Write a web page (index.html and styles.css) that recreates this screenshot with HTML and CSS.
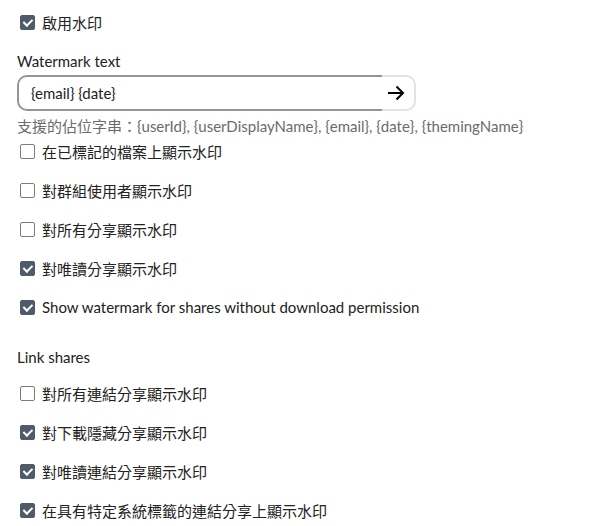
FILE: index.html
```html
<!DOCTYPE html>
<html lang="zh-Hant">
<head>
    <meta charset="UTF-8">
    <title>Watermark settings</title>
    <link rel="stylesheet" href="styles.css">
</head>
<body>
    <div class="settings">
        <label class="check checked"><span class="box"></span><span>啟用水印</span></label>

        <div class="label">Watermark text</div>
        <div class="field">
            <div class="field-input">{email} {date}</div>
            <button class="field-btn" type="button">
                <svg width="20" height="20" viewBox="0 0 20 20"><path d="M2 10h15M10.5 3.5 17 10l-6.5 6.5" fill="none" stroke="#000" stroke-width="2"/></svg>
            </button>
        </div>
        <div class="hint">支援的佔位字串：{userId}, {userDisplayName}, {email}, {date}, {themingName}</div>

        <div class="list">
            <label class="check"><span class="box"></span><span>在已標記的檔案上顯示水印</span></label>
            <label class="check"><span class="box"></span><span>對群組使用者顯示水印</span></label>
            <label class="check"><span class="box"></span><span>對所有分享顯示水印</span></label>
            <label class="check checked"><span class="box"></span><span>對唯讀分享顯示水印</span></label>
            <label class="check checked"><span class="box"></span><span>Show watermark for shares without download permission</span></label>
        </div>

        <div class="label section">Link shares</div>
        <div class="list">
            <label class="check"><span class="box"></span><span>對所有連結分享顯示水印</span></label>
            <label class="check checked"><span class="box"></span><span>對下載隱藏分享顯示水印</span></label>
            <label class="check checked"><span class="box"></span><span>對唯讀連結分享顯示水印</span></label>
            <label class="check checked"><span class="box"></span><span>在具有特定系統標籤的連結分享上顯示水印</span></label>
        </div>
    </div>
</body>
</html>
```
FILE: styles.css
```css
body {
    margin: 0;
    background: #fff;
    font-family: Lato, "Noto Sans CJK TC", sans-serif;
    font-size: 15px;
    color: #222;
}
.settings {
    padding: 7px 0 0 17px;
    display: flex;
    flex-direction: column;
}
.list {
    display: flex;
    flex-direction: column;
    gap: 9px;
}
.check {
    display: flex;
    align-items: center;
    height: 30px;
    padding-left: 3px;
    gap: 7px;
    cursor: pointer;
}
.check .box {
    width: 15px;
    height: 15px;
    border: 1.5px solid #7c7c7c;
    border-radius: 2px;
    box-sizing: border-box;
    flex-shrink: 0;
    position: relative;
}
.check.checked .box {
    background: #4f5b6a;
    border-color: #4f5b6a;
}
.check.checked .box::after {
    content: '';
    position: absolute;
    left: 3.5px;
    top: 1px;
    width: 3.5px;
    height: 7px;
    border: solid #fff;
    border-width: 0 2px 2px 0;
    transform: rotate(45deg);
}
.label {
    margin-top: 14px;
    height: 20px;
    line-height: 20px;
}
.label.section {
    margin-top: 25px;
    margin-bottom: 11px;
}
.field {
    margin-top: 4px;
    width: 399px;
    height: 36px;
    display: flex;
}
.field-input {
    flex: 1;
    border: 2px solid #949494;
    border-right: none;
    border-radius: 10px 0 0 10px;
    padding-left: 12px;
    display: flex;
    align-items: center;
}
.field-btn {
    width: 34px;
    border: 2px solid #e2e2e2;
    border-left: none;
    border-radius: 0 10px 10px 0;
    background: #fff;
    padding: 0 4px 0 0;
    display: flex;
    align-items: center;
    justify-content: center;
}
.hint {
    margin-top: 5px;
    height: 20px;
    line-height: 20px;
    color: #6b6b6b;
}
```
